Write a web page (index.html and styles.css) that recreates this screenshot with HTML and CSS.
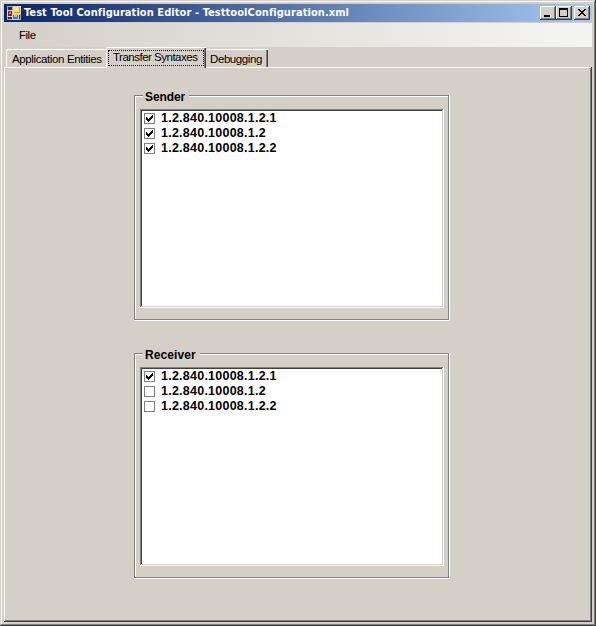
FILE: index.html
```html
<!DOCTYPE html>
<html lang="en">
<head>
<meta charset="utf-8">
<title>Test Tool Configuration Editor</title>
<link rel="stylesheet" href="styles.css">
</head>
<body>
<svg class="defs" width="0" height="0" aria-hidden="true">
  <symbol id="check" viewBox="0 0 7 7"><path d="M0 2h1v1h1v1h1v-1h1v-1h1v-1h1v-1h1v3h-1v1h-1v1h-1v1h-1v1h-1v-1h-1v-1h-1z"/></symbol>
</svg>
<div class="window">
  <header class="titlebar">
    <svg class="app-icon" width="14" height="14" viewBox="0 0 14 14" shape-rendering="crispEdges">
      <path fill="#aaa9a4" d="M0 0h14v14H0z"/>
      <path fill="#173273" d="M1 1h4v3H1zM1 11h4v2H1zM12 9h1v4h-1z"/>
      <path fill="#d9d3c5" d="M6 0h8v8H6zM0 4h6v7H0zM5 8h7v6H5z"/>
      <path fill="#e99a13" d="M7 1h6v6H7z"/><path fill="#ffdf57" d="M7 1h5v5H7z"/><path fill="#fff2a0" d="M8 2h2v2H8z"/>
      <path fill="#a91912" d="M1 5h4v5H1z"/><path fill="#ef6d5b" d="M2 6h2v2H2z"/>
      <path fill="#3979d2" d="M6 9h5v4H6z"/><path fill="#88b9f4" d="M7 9h3v2H7z"/>
    </svg>
    <h1 class="title">Test Tool Configuration Editor - TesttoolConfiguration.xml</h1>
    <div class="controls">
      <button class="control" aria-label="Minimize"><svg width="16" height="14" shape-rendering="crispEdges"><path d="M4 9h6v2H4z"/></svg></button>
      <button class="control" aria-label="Maximize"><svg width="16" height="14" shape-rendering="crispEdges"><path fill-rule="evenodd" d="M3 2h9v9H3zM4 4v6h7V4z"/></svg></button>
      <button class="control close" aria-label="Close"><svg width="16" height="14" shape-rendering="crispEdges"><path d="M4 3h2v1h1v1h2V4h1V3h2v1h-1v1h-1v1H9v1h1v1h1v1h1v1h-2V9H9V8H7v1H6v1H4V9h1V8h1V7h1V6H6V5H5V4H4z"/></svg></button>
    </div>
  </header>
  <nav class="menubar"><span class="menu">File</span></nav>
  <div class="tabs">
    <div class="tab tab-entities"><span>Application Entities</span></div>
    <div class="tab selected"><span class="focus">Transfer Syntaxes</span></div>
    <div class="tab tab-debug"><span>Debugging</span></div>
  </div>
  <main class="page">
    <section class="group">
      <h2 class="legend sender">Sender</h2>
      <ul class="list">
        <li><i class="box"><svg width="7" height="7"><use href="#check"/></svg></i><span>1.2.840.10008.1.2.1</span></li>
        <li><i class="box"><svg width="7" height="7"><use href="#check"/></svg></i><span>1.2.840.10008.1.2</span></li>
        <li><i class="box"><svg width="7" height="7"><use href="#check"/></svg></i><span>1.2.840.10008.1.2.2</span></li>
      </ul>
    </section>
    <section class="group">
      <h2 class="legend receiver">Receiver</h2>
      <ul class="list">
        <li><i class="box"><svg width="7" height="7"><use href="#check"/></svg></i><span>1.2.840.10008.1.2.1</span></li>
        <li><i class="box"></i><span>1.2.840.10008.1.2</span></li>
        <li><i class="box"></i><span>1.2.840.10008.1.2.2</span></li>
      </ul>
    </section>
  </main>
</div>
</body>
</html>
```
FILE: styles.css
```css
* { box-sizing: border-box; }
body { margin: 0; font: 12px/14px "Liberation Sans", sans-serif; color: #000; }
h1, h2, ul { margin: 0; padding: 0; }
svg { display: block; }
.defs { position: absolute; }

.window {
  width: 596px;
  height: 626px;
  padding: 4px;
  display: flex;
  flex-direction: column;
  background: #d4d0c8;
  box-shadow: inset -1px -1px #404040, inset 1px 1px #d4d0c8, inset -2px -2px #808080, inset 2px 2px #fff;
}

.titlebar {
  height: 18px;
  flex: none;
  display: flex;
  align-items: flex-start;
  padding: 2px 2px 0 3px;
  background: linear-gradient(to right, #0a246a, #a6caf0);
}
.title {
  margin: -1px 0 0 3px;
  font: bold 11px/16px "DejaVu Sans Condensed", "DejaVu Sans", sans-serif;
  letter-spacing: 0.07px;
  color: #fff;
  white-space: nowrap;
}
.controls { display: flex; margin-left: auto; }
.control {
  width: 16px;
  height: 14px;
  padding: 0;
  border: 0;
  background: #d4d0c8;
  box-shadow: inset -1px -1px #404040, inset 1px 1px #fff, inset -2px -2px #808080;
}
.close { margin-left: 2px; }

.menubar {
  height: 24px;
  flex: none;
  margin-top: 1px;
  padding: 5px 15px;
  background: linear-gradient(to right, #d4d0c8, #f5f5f3);
}
.menu { font-size: 11.5px; letter-spacing: -0.5px; }

.tabs {
  display: flex;
  align-items: flex-end;
  height: 20px;
  flex: none;
  padding-left: 2px;
  font-size: 11.5px;
  white-space: nowrap;
}
.tab {
  height: 18px;
  border-top: 1px solid #fff;
  border-left: 1px solid #fff;
  border-top-left-radius: 2px;
  padding: 2px 0 0 5px;
}
.tab-entities { width: 100px; letter-spacing: -0.38px; }
.selected {
  width: 100px;
  height: 21px;
  margin-bottom: -1px;
  padding: 2px 0 0 1px;
  background: #d4d0c8;
  box-shadow: inset -1px 0 #404040, inset -2px 0 #808080;
  letter-spacing: -0.5px;
  z-index: 1;
}
.focus {
  display: block;
  width: 96px;
  height: 16px;
  padding-left: 4px;
  border: 1px dotted #000;
  line-height: 13px;
}
.tab-debug {
  width: 62px;
  padding-left: 4px;
  border-left: 0;
  letter-spacing: -0.41px;
  box-shadow: inset -1px 0 #404040, inset -2px 0 #808080;
}

.page {
  flex: none;
  height: 555px;
  padding: 28px 0 0 130px;
  box-shadow: inset -1px -1px #404040, inset 1px 1px #fff, inset -2px -2px #808080;
}
.group {
  width: 316px;
  height: 226px;
  margin-bottom: 32px;
  padding-left: 6px;
  border: 1px solid #fff;
  border-width: 0 1px 1px 0;
  box-shadow: inset 1px 1px #808080, inset -1px -1px #808080, inset 2px 2px #fff;
}
.legend {
  width: 46px;
  height: 14px;
  margin: 0 0 0 3px;
  padding-left: 2px;
  background: #d4d0c8;
  font: bold 12px/16px "Liberation Sans", sans-serif;
  transform: translateY(-6px);
  letter-spacing: -0.1px;
}
.receiver { width: 57px; letter-spacing: 0.1px; }
.list {
  width: 304px;
  height: 199px;
  padding: 2px 4px;
  list-style: none;
  background: #fff;
  box-shadow: inset -1px -1px #fff, inset 1px 1px #808080, inset -2px -2px #d4d0c8, inset 2px 2px #404040;
}
.list li {
  display: flex;
  height: 15px;
  padding-top: 2px;
  font: bold 12.5px/14px "Liberation Sans", sans-serif;
  letter-spacing: 0.24px;
}
.list span { margin: -2px 0 0 6px; }
.box {
  width: 11px;
  height: 11px;
  padding: 1px;
  border: 1px solid #808080;
}
```
